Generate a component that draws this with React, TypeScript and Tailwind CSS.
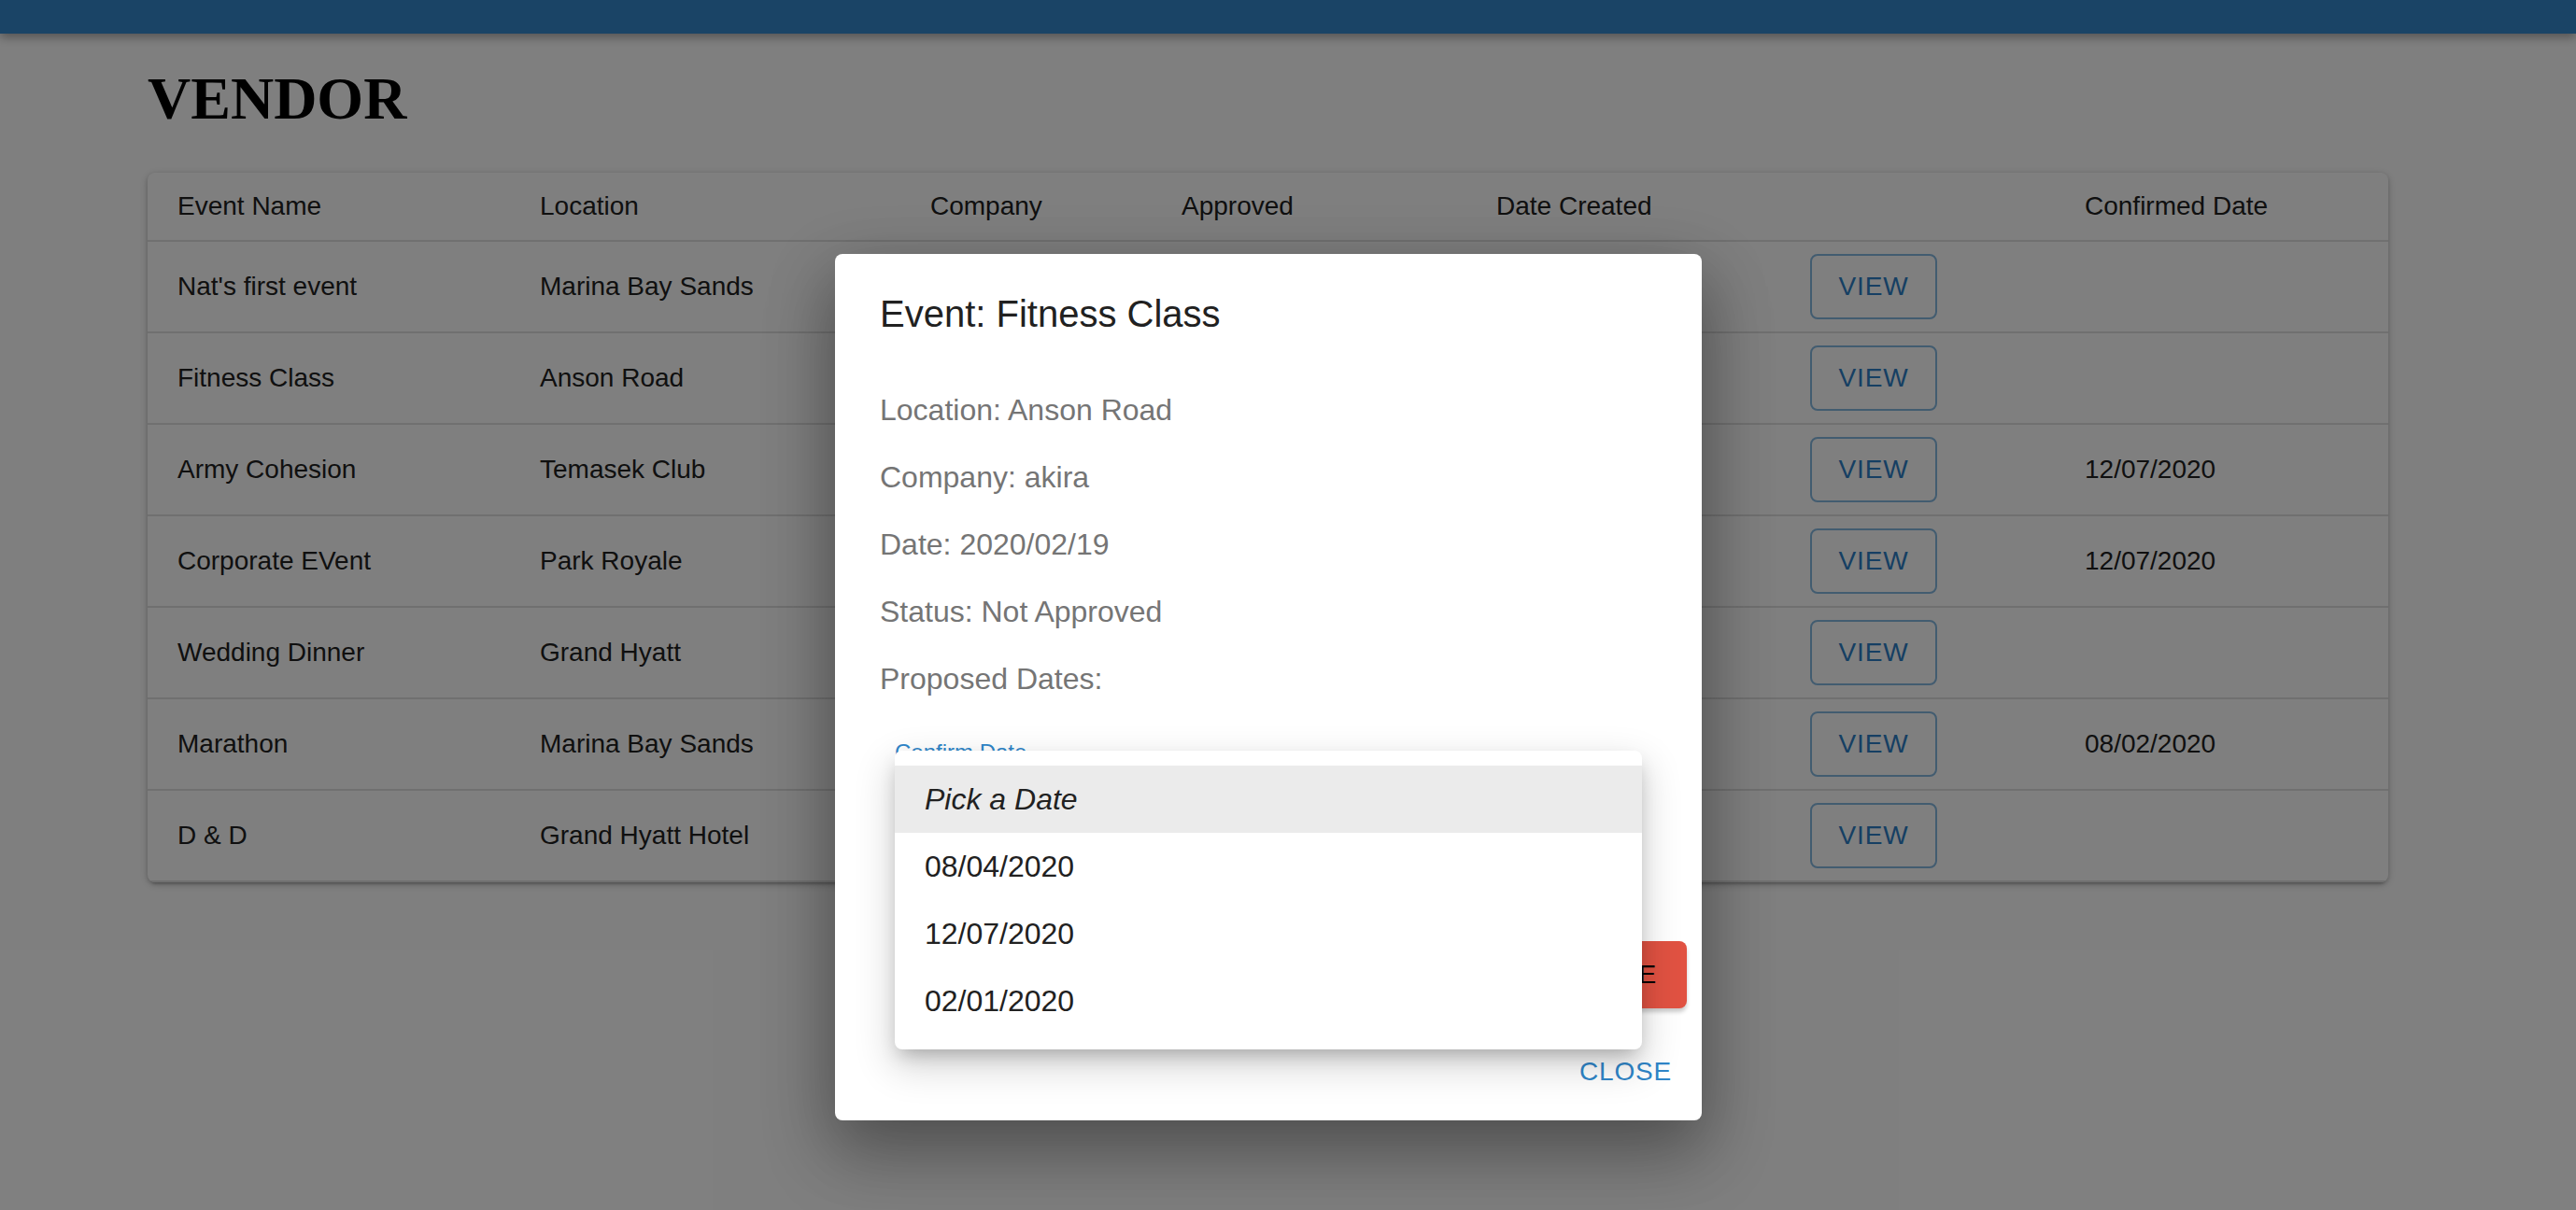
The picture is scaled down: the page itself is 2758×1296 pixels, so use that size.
import React from "react";

type EventRow = {
  name: string;
  location: string;
  confirmed: string;
};

const EVENTS: EventRow[] = [
  { name: "Nat's first event", location: "Marina Bay Sands", confirmed: "" },
  { name: "Fitness Class", location: "Anson Road", confirmed: "" },
  { name: "Army Cohesion", location: "Temasek Club", confirmed: "12/07/2020" },
  { name: "Corporate EVent", location: "Park Royale", confirmed: "12/07/2020" },
  { name: "Wedding Dinner", location: "Grand Hyatt", confirmed: "" },
  { name: "Marathon", location: "Marina Bay Sands", confirmed: "08/02/2020" },
  { name: "D & D", location: "Grand Hyatt Hotel", confirmed: "" },
];

const DETAILS = [
  "Location: Anson Road",
  "Company: akira",
  "Date: 2020/02/19",
  "Status: Not Approved",
  "Proposed Dates:",
];

const DATES = ["08/04/2020", "12/07/2020", "02/01/2020"];

// column widths measured off the table
const ROW = "grid grid-cols-[388px_418px_269px_337px_336px_294px_357px] items-center";

const App: React.FC = () => {
  return (
    <div className="relative h-[1296px] w-full overflow-hidden bg-white font-['Liberation_Sans',Arial,sans-serif] text-[#212121]">
      <header className="h-[36px] bg-[#3488cc] shadow-[0_4px_10px_rgba(0,0,0,0.35)]" />

      <main className="pl-[158px]">
        <h1 className="mt-[38px] font-['Liberation_Serif','Times_New_Roman',serif] text-[64px] font-bold leading-none text-black">
          VENDOR
        </h1>

        <div className="mt-[47px] w-[2399px] overflow-hidden rounded-[8px] bg-white shadow-[0_2px_4px_rgba(0,0,0,0.14),0_6px_2px_-4px_rgba(0,0,0,0.12),0_2px_10px_rgba(0,0,0,0.2)]">
          <div className={`${ROW} h-[74px] border-b-2 border-[#e0e0e0] text-[28px]`}>
            <div className="pl-[32px]">Event Name</div>
            <div className="pl-[32px]">Location</div>
            <div className="pl-[32px]">Company</div>
            <div className="pl-[32px]">Approved</div>
            <div className="pl-[32px]">Date Created</div>
            <div className="pl-[32px]"></div>
            <div className="pl-[32px]">Confirmed Date</div>
          </div>
          {EVENTS.map((ev) => (
            <div key={ev.name} className={`${ROW} h-[98px] border-b-2 border-[#e0e0e0] text-[28px]`}>
              <div className="pl-[32px]">{ev.name}</div>
              <div className="pl-[32px]">{ev.location}</div>
              <div className="pl-[32px]"></div>
              <div className="pl-[32px]"></div>
              <div className="pl-[32px]"></div>
              <div className="pl-[32px]">
                <button className="flex h-[70px] w-[136px] items-center justify-center rounded-[8px] border-2 border-[#3488cc]/60 text-[28px] uppercase tracking-[0.8px] text-[#2c7fc6]">
                  View
                </button>
              </div>
              <div className="pl-[32px]">{ev.confirmed}</div>
            </div>
          ))}
        </div>
      </main>

      {/* backdrop */}
      <div className="absolute inset-0 z-20 bg-black/50" />

      {/* dialog */}
      <div className="absolute left-[894px] top-[272px] z-30 flex h-[928px] w-[928px] flex-col rounded-[8px] bg-white pt-[32px] shadow-[0_22px_70px_rgba(0,0,0,0.3),0_40px_80px_8px_rgba(0,0,0,0.14)]">
        <h2 className="px-[48px] text-[40px] leading-[64px] text-[#212121]">Event: Fitness Class</h2>

        <div className="mt-[47px] px-[48px]">
          {DETAILS.map((d) => (
            <p key={d} className="mb-[24px] text-[32px] leading-[48px] text-[#757575]">
              {d}
            </p>
          ))}

          <div className="relative ml-[16px] mt-[43px] w-[800px]">
            <label className="block text-[24px] leading-none text-[#2f86c9]">Confirm Date</label>
            <div className="mt-[16px] h-[60px] border-b-4 border-[#2f86c9]" />

            {/* open select menu */}
            <ul className="absolute left-0 top-[10px] z-10 w-[800px] rounded-[8px] bg-white py-[16px] shadow-[0_10px_20px_-6px_rgba(0,0,0,0.25),0_16px_40px_4px_rgba(0,0,0,0.16)]">
              <li className="flex h-[72px] items-center bg-[#ebebeb] px-[32px] text-[32px] italic">Pick a Date</li>
              {DATES.map((d) => (
                <li key={d} className="flex h-[72px] items-center px-[32px] text-[32px]">
                  {d}
                </li>
              ))}
            </ul>
          </div>
        </div>

        <div className="mt-auto flex flex-col items-end gap-[32px] pb-[16px] pr-[16px]">
          <button className="h-[72px] rounded-[8px] bg-[#e15242] px-[32px] text-[28px] uppercase tracking-[0.8px] text-black shadow-[0_4px_4px_rgba(0,0,0,0.2)]">
            Approve
          </button>
          <button className="h-[72px] px-[16px] text-[28px] uppercase tracking-[0.8px] text-[#2f86c9]">Close</button>
        </div>
      </div>
    </div>
  );
};

export default App;
